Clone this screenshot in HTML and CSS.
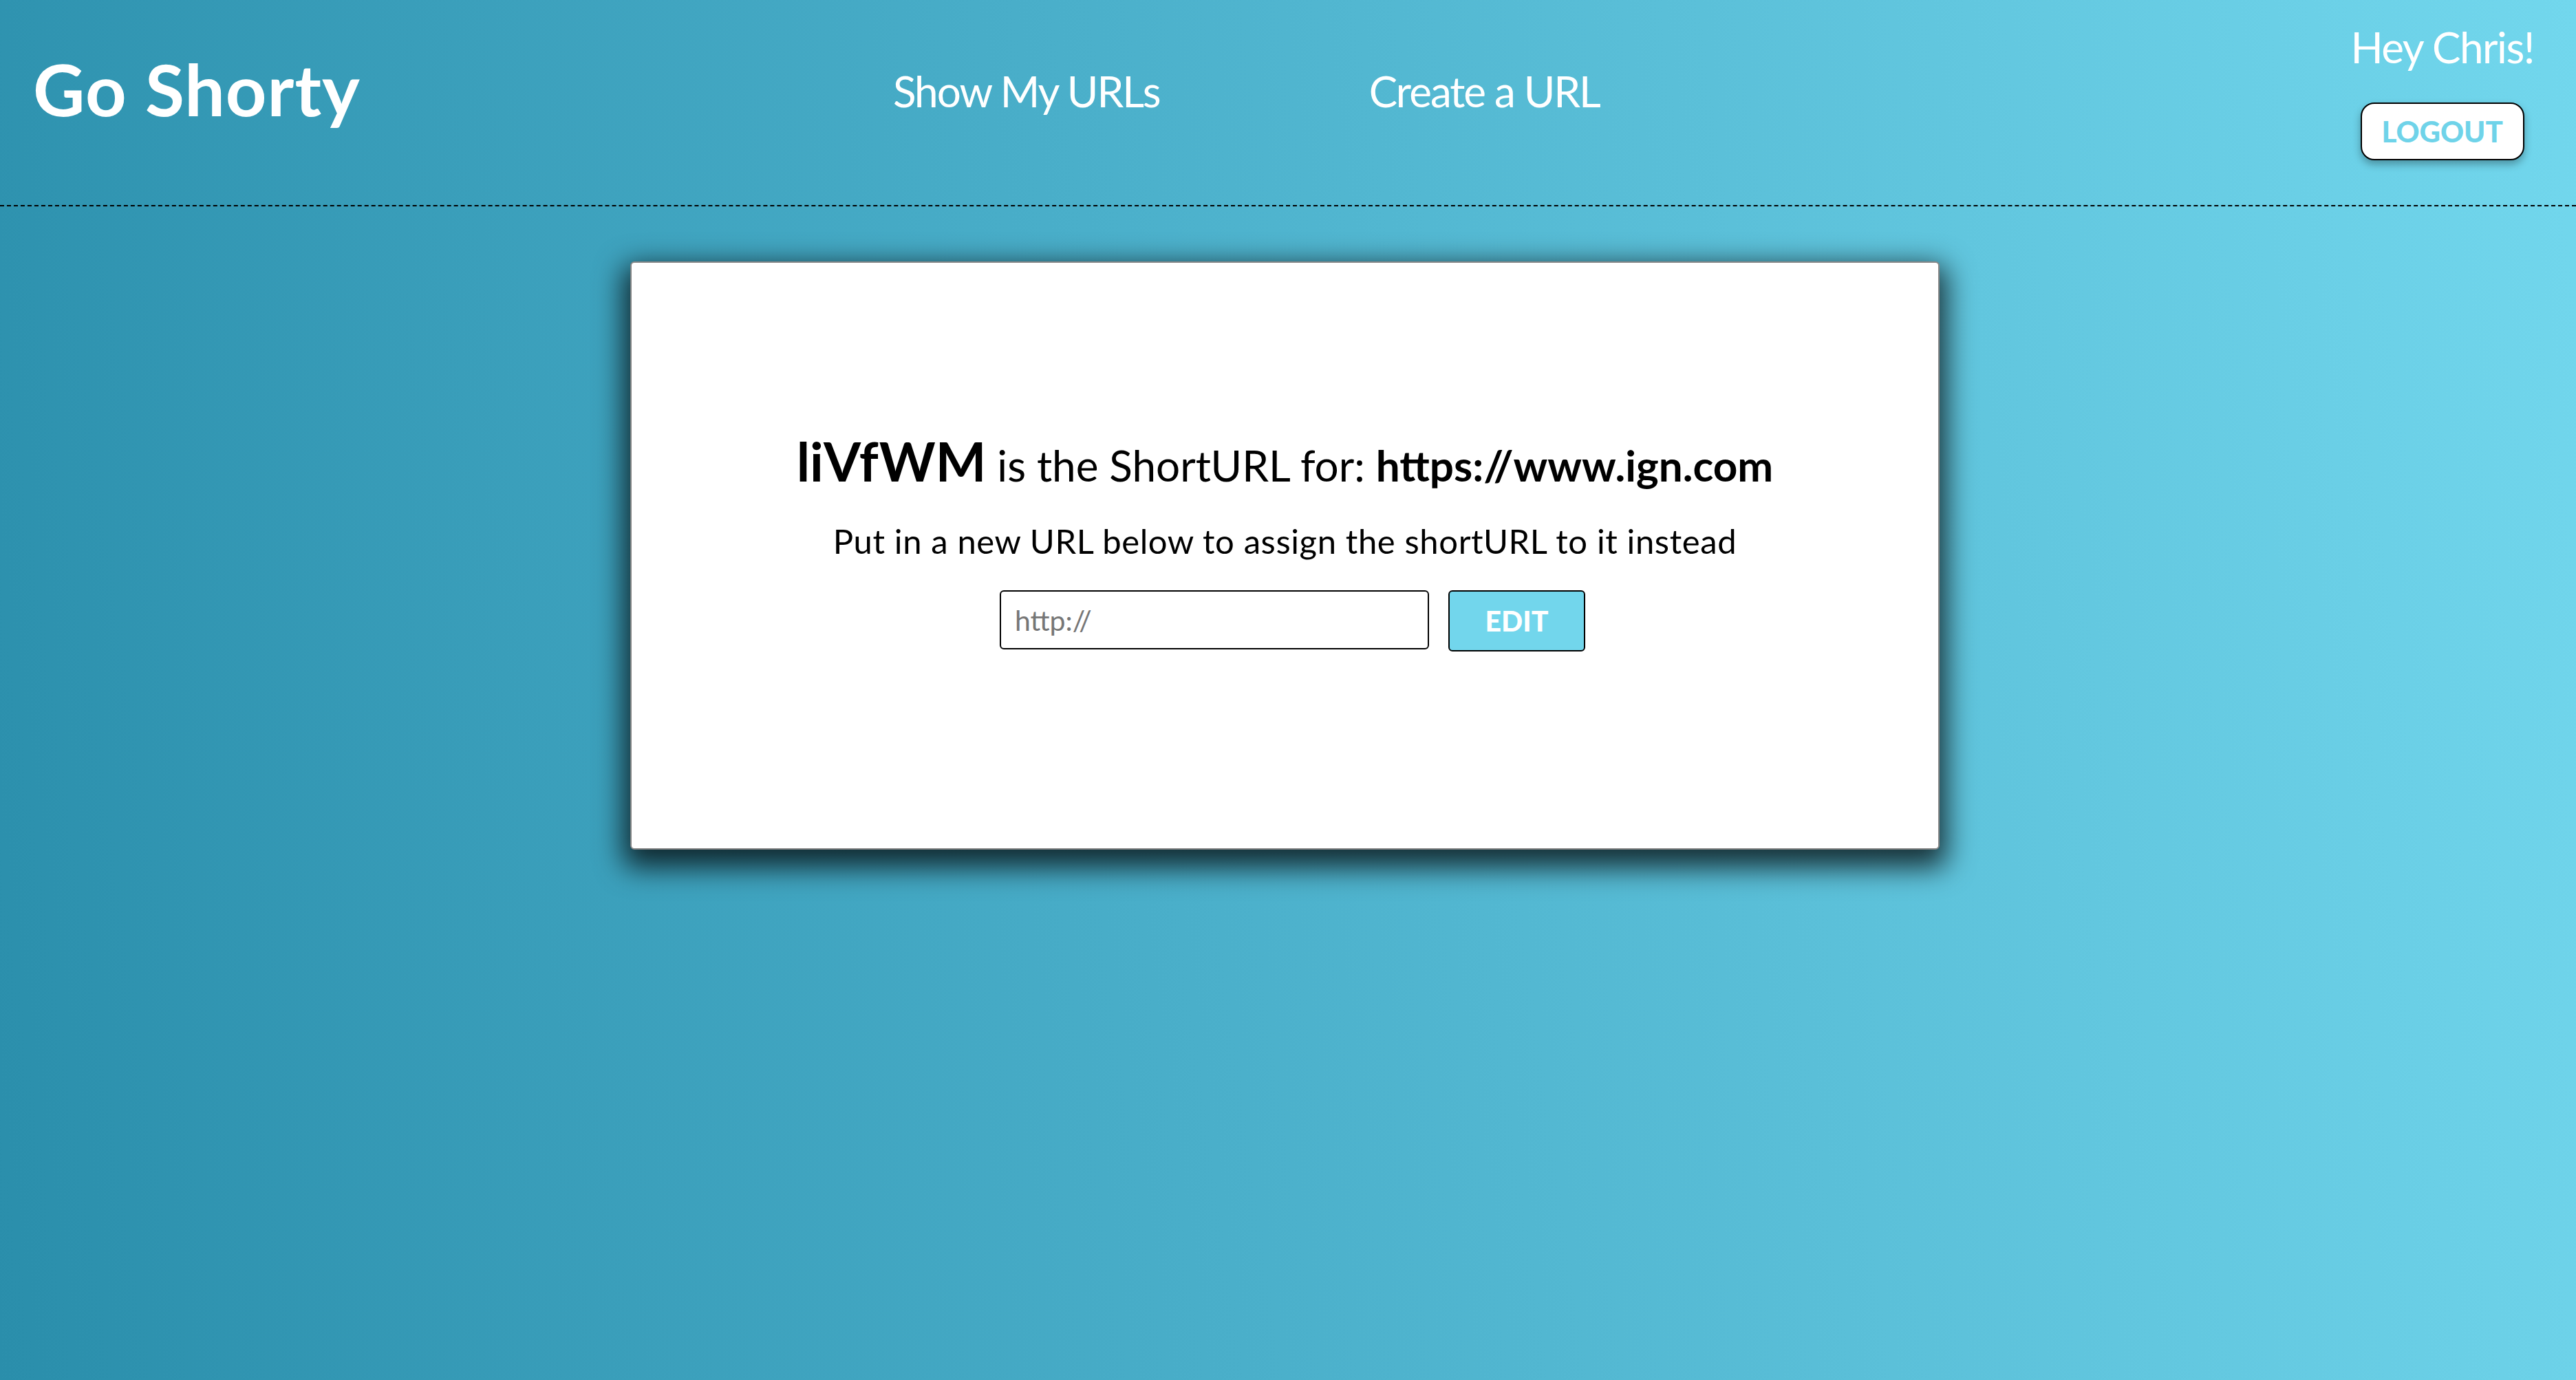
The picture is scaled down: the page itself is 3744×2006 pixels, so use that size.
FILE: index.html
```html
<!DOCTYPE html>
<html lang="en">
<head>
<meta charset="utf-8">
<title>Go Shorty</title>
<link rel="stylesheet" href="styles.css">
</head>
<body>
<header class="topbar">
  <h1 class="brand">Go Shorty</h1>
  <nav class="nav">
    <a class="nav-link" href="#">Show My URLs</a>
    <a class="nav-link" href="#">Create a URL</a>
  </nav>
  <div class="user">
    <div class="greeting">Hey Chris!</div>
    <button class="logout">LOGOUT</button>
  </div>
</header>
<main class="main">
  <section class="card">
    <p class="headline"><span class="code">liVfWM</span> is the ShortURL for: <span class="target">https://www.ign.com</span></p>
    <p class="hint">Put in a new URL below to assign the shortURL to it instead</p>
    <form class="edit-form">
      <input class="url-input" type="text" placeholder="http://">
      <button class="edit-btn" type="button">EDIT</button>
    </form>
  </section>
</main>
</body>
</html>
```
FILE: styles.css
```css
html, body {
  margin: 0;
  padding: 0;
}
body {
  min-height: 100vh;
  font-family: "Lato", "Noto Sans", sans-serif;
  background: linear-gradient(82deg, #2a8eab 0%, #4aafca 45%, #72d7ed 100%);
  color: #000;
}
.topbar {
  display: flex;
  align-items: flex-start;
  height: 298px;
  padding: 0 61px 0 48px;
  border-bottom: 2px dashed #000;
}
.brand {
  margin: 77px 0 0 0;
  width: 1250px;
  font-size: 104px;
  line-height: 1;
  font-weight: 700;
  letter-spacing: 1px;
  color: #fff;
}
.nav {
  display: flex;
  gap: 304px;
  margin-top: 101px;
}
.nav-link {
  font-size: 62px;
  line-height: 1;
  letter-spacing: -2px;
  color: #fff;
  text-decoration: none;
}
.user {
  margin-left: auto;
  display: flex;
  flex-direction: column;
  align-items: center;
  padding-top: 37px;
}
.greeting {
  font-size: 62px;
  line-height: 1;
  letter-spacing: -1.5px;
  color: #fff;
}
.logout {
  margin-top: 50px;
  width: 238px;
  height: 84px;
  background: #fff;
  border: 2px solid #000;
  border-radius: 20px;
  color: #6fd3e9;
  font-family: "Lato", "Noto Sans", sans-serif;
  font-weight: 900;
  font-size: 42px;
  padding: 0;
  box-shadow: 0 6px 12px rgba(0, 0, 0, 0.3);
}
.main {
  padding: 80px 9px 0 0;
}
.card {
  box-sizing: border-box;
  width: 1903px;
  height: 855px;
  margin: 0 auto;
  padding-top: 248px;
  background: #fff;
  border: 2px solid #878787;
  border-radius: 6px;
  box-shadow: 0 16px 40px 10px rgba(0, 0, 0, 0.75);
  display: flex;
  flex-direction: column;
  align-items: center;
}
.headline {
  margin: 0;
  font-size: 62px;
  line-height: 80px;
}
.code {
  font-size: 78px;
  font-weight: 700;
}
.target {
  font-weight: 700;
}
.hint {
  margin: 46px 0 0 0;
  font-size: 49px;
  line-height: 1;
  letter-spacing: 0.6px;
}
.edit-form {
  display: flex;
  align-items: flex-start;
  gap: 28px;
  margin: 47px 0 0 22px;
}
.url-input {
  box-sizing: border-box;
  width: 624px;
  height: 86px;
  border: 2px solid #000;
  border-radius: 6px;
  padding: 0 20px;
  font-family: "Lato", "Noto Sans", sans-serif;
  font-size: 41px;
  outline: none;
}
.url-input::placeholder {
  color: #767676;
}
.edit-btn {
  box-sizing: border-box;
  width: 199px;
  height: 89px;
  background: #72d6ec;
  border: 2px solid #000;
  border-radius: 6px;
  color: #fff;
  font-family: "Lato", "Noto Sans", sans-serif;
  font-weight: 900;
  font-size: 41px;
  padding: 0;
}
```
